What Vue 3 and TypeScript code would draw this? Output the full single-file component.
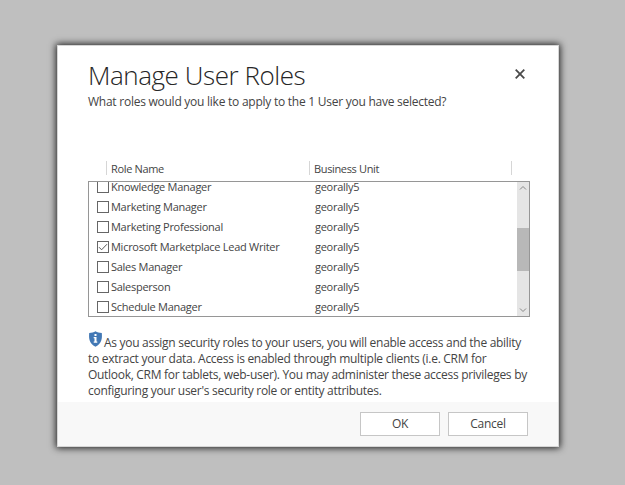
<script setup lang="ts">
interface Role {
  name: string
  unit: string
  checked: boolean
}

const roles: Role[] = [
  { name: 'Knowledge Manager', unit: 'georally5', checked: false },
  { name: 'Marketing Manager', unit: 'georally5', checked: false },
  { name: 'Marketing Professional', unit: 'georally5', checked: false },
  { name: 'Microsoft Marketplace Lead Writer', unit: 'georally5', checked: true },
  { name: 'Sales Manager', unit: 'georally5', checked: false },
  { name: 'Salesperson', unit: 'georally5', checked: false },
  { name: 'Schedule Manager', unit: 'georally5', checked: false },
]
</script>

<template>
  <main class="backdrop">
    <section class="dialog" role="dialog">
      <div class="body">
        <header class="head">
          <div>
            <h1>Manage User Roles</h1>
            <p class="sub">What roles would you like to apply to the 1 User you have selected?</p>
          </div>
          <button class="close" aria-label="Close">
            <svg width="12" height="12" viewBox="0 0 12 12"><path d="M1.700 1.700 10.300 10.300M10.300 1.700 1.700 10.300" /></svg>
          </button>
        </header>

        <div class="columns">
          <span class="col name">Role Name</span>
          <span class="col unit">Business Unit</span>
          <span class="col last"></span>
        </div>

        <div class="grid">
          <div class="rows">
            <div v-for="r in roles" :key="r.name" class="row">
              <span class="check">
                <svg v-if="r.checked" width="10" height="10" viewBox="0 0 10 10"><path d="M1 5.200 3.600 7.800 9 2.200" /></svg>
              </span>
              <span class="role">{{ r.name }}</span>
              <span class="bu">{{ r.unit }}</span>
            </div>
          </div>
          <div class="scrollbar">
            <svg width="12" height="12" viewBox="0 0 12 12"><path d="M3 7.500 6 4.500 9 7.500" /></svg>
            <div class="thumb"></div>
            <svg class="down" width="12" height="12" viewBox="0 0 12 12"><path d="M3 4.500 6 7.500 9 4.500" /></svg>
          </div>
        </div>

        <div class="note">
          <div class="line l1">
            <svg class="shield" width="15" height="16" viewBox="0 0 15 16">
              <path class="plate" d="M7.500.3C5.700 1.600 3.700 2 1.200 2c-.5 5.900.1 10.400 6.300 13.700C13.700 12.400 14.300 7.900 13.800 2 11.300 2 9.300 1.600 7.500.3Z" />
              <path class="mark" d="M6.500 3h2v2h-2ZM5.700 6h2.800v4.500h.8v1.200H5.700v-1.200h.8V7.200h-.8Z" />
            </svg><span>As you assign security roles to your users, you will enable access and the ability</span>
          </div>
          <div class="line">to extract your data. Access is enabled through multiple clients (i.e. CRM for</div>
          <div class="line">Outlook, CRM for tablets, web-user). You may administer these access privileges by</div>
          <div class="line">configuring your user's security role or entity attributes.</div>
        </div>
      </div>

      <footer class="foot">
        <button class="btn">OK</button>
        <button class="btn">Cancel</button>
      </footer>
    </section>
  </main>
</template>

<style>
body { margin: 0; background: #bfbfbf; }
</style>

<style scoped>
.backdrop {
  box-sizing: border-box;
  height: 485px;
  padding: 45px 66px 38px 57px;
  background: #bfbfbf;
  font-family: "Segoe UI", "Open Sans", "Noto Sans", sans-serif;
  font-size: 12px;
  color: #444;
  overflow: hidden;
}
.dialog {
  box-sizing: border-box;
  width: 502px;
  height: 402px;
  border: 1px solid #d6d6d6;
  background: #fff;
  box-shadow: 0 0 7px 1px rgba(0, 0, 0, 0.85);
  display: flex;
  flex-direction: column;
  white-space: nowrap;
}
.body { height: 356px; padding: 0 28px 0 30px; box-sizing: border-box; }
.head { display: flex; justify-content: space-between; height: 115px; }
h1 {
  margin: 11px 0 1px;
  font-size: 26px;
  line-height: 36px;
  font-weight: 300;
  letter-spacing: -0.45px;
  color: #262626;
}
.sub { margin: 0; line-height: 16px; letter-spacing: -0.25px; }
.close { width: 12px; height: 12px; margin: 22px 4px 0 0; padding: 0; border: 0; background: none; }
.close svg { display: block; fill: none; stroke: #4a4a4a; stroke-width: 1.8; }
.columns {
  display: flex;
  height: 20px;
  line-height: 16px;
  padding-left: 18px;
  font-size: 11px;
  letter-spacing: -0.35px;
}
.col { height: 14px; border-left: 1px solid #d6d6d6; padding-left: 4px; box-sizing: border-box; }
.name { width: 203px; }
.unit { width: 202px; }
.grid {
  box-sizing: border-box;
  width: 442px;
  height: 136px;
  border: 1px solid #969696;
  display: flex;
  overflow: hidden;
}
.rows {
  flex: 1;
  height: 134px;
  overflow: hidden;
  display: flex;
  flex-direction: column;
  font-size: 11px;
  letter-spacing: -0.27px;
}
.row {
  display: flex;
  flex: none;
  align-items: center;
  height: 20px;
  padding-left: 8px;
}
.row:first-child { margin-top: -5px; }
.check {
  box-sizing: border-box;
  width: 12px;
  height: 12px;
  border: 1px solid #666;
  flex: none;
  margin-right: 2px;
}
.check svg { display: block; fill: none; stroke: #555; stroke-width: 1; }
.role { width: 204px; flex: none; line-height: 16px; }
.bu { line-height: 16px; }
.scrollbar {
  width: 12px;
  background: #e5e5e5;
  display: flex;
  flex-direction: column;
}
.scrollbar svg { display: block; fill: none; stroke: #888; }
.thumb { height: 43px; margin-top: 34px; background: #b8b8b8; }
.down { margin-top: auto; }
.note { padding-top: 14px; letter-spacing: -0.29px; }
.line { height: 16px; line-height: 16px; }
.l1 { display: flex; height: 20px; }
.l1 span { padding-top: 4px; line-height: 16px; }
.shield { flex: none; width: 15px; height: 16px; margin-right: 1px; }
.plate { fill: #4278b5; }
.mark { fill: #fff; }
.foot {
  height: 44px;
  background: #f8f8f8;
  padding-right: 30px;
  display: flex;
  justify-content: flex-end;
  align-items: center;
  gap: 8px;
}
.btn {
  box-sizing: border-box;
  width: 80px;
  height: 24px;
  padding: 0 0 1px;
  border: 1px solid #c6c6c6;
  background: #fff;
  font: inherit;
  letter-spacing: -0.3px;
  color: #444;
}
</style>
